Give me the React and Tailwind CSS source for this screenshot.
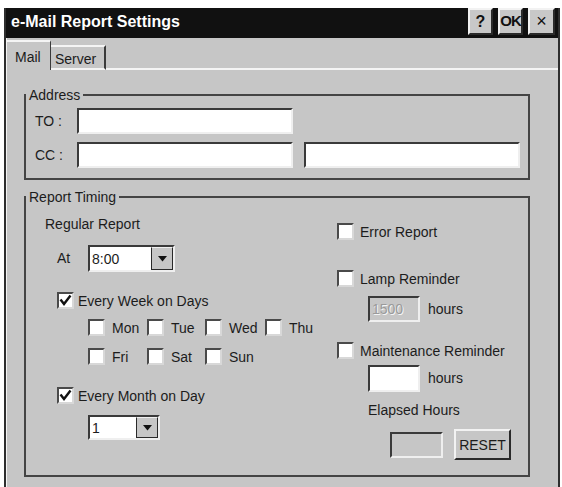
import React from 'react'

const sunken = 'border-2 border-t-[#3a3a3a] border-l-[#3a3a3a] border-r-[#efefef] border-b-[#efefef]'
const raised = 'border-2 border-t-[#f2f2f2] border-l-[#f2f2f2] border-r-[#2a2a2a] border-b-[#2a2a2a]'

const Check = ({ checked }) => (
  <span className={`w-[17px] h-[17px] shrink-0 bg-white flex items-center justify-center border-2 border-t-[#4a4a4a] border-l-[#4a4a4a] border-r-[#d8d8d8] border-b-[#d8d8d8]`}>
    {checked && (
      <svg width="13" height="13" viewBox="0 0 13 13">
        <path d="M1.5 5.5 L5 10 L11.5 1.5" fill="none" stroke="#111" strokeWidth="2.4" />
      </svg>
    )}
  </span>
)

const CheckRow = ({ checked, label, gap = 'gap-[6px]' }) => (
  <label className={`flex items-center ${gap} leading-[16px]`}>
    <Check checked={checked} />
    <span>{label}</span>
  </label>
)

const Combo = ({ value, width, height, btn }) => (
  <div className={`flex ${width} ${height} bg-white ${sunken}`}>
    <span className="flex-1 flex items-center pl-[2px] leading-[16px]">{value}</span>
    <span className={`${btn} flex items-center justify-center bg-[#c6c6c6] border-l border-[#2a2a2a] border-t border-t-[#f0f0f0] border-r border-r-[#2a2a2a] border-b border-b-[#2a2a2a]`}>
      <svg width="9" height="6" viewBox="0 0 9 6">
        <path d="M0 0 H9 L4.5 5.5 Z" fill="#111" />
      </svg>
    </span>
  </div>
)

const TitleButton = ({ children, w, className = '' }) => (
  <span className={`${w} h-[27px] flex items-center justify-center bg-[#c8c8c8] text-[#111] ${raised} ${className}`}>
    {children}
  </span>
)

const days = [
  ['Mon', 'Tue', 'Wed', 'Thu'],
  ['Fri', 'Sat', 'Sun'],
]

export default function App() {
  return (
    <div className="w-[562px] h-[487px] bg-white overflow-hidden pl-[4px] pt-[8px] font-['Liberation_Sans',Arial,sans-serif] text-[14px] text-[#1c1c1c]">
      <div className="w-[556px] h-[479px] bg-[#c6c6c6] border-x-2 border-[#2e2e2e] flex flex-col">
        {/* Title bar */}
        <div className="h-[30px] bg-[#111] flex items-start justify-between pl-[5px] pr-[3px]">
          <span className="text-white font-bold text-[16px] leading-[28px]">e-Mail Report Settings</span>
          <div className="flex gap-[5px]">
            <TitleButton w="w-[25px]" className="font-bold text-[16px]">?</TitleButton>
            <TitleButton w="w-[25px]" className="font-bold text-[15px] tracking-[-1px]">OK</TitleButton>
            <TitleButton w="w-[27px]" className="text-[18px]">×</TitleButton>
          </div>
        </div>

        <div className="flex-1 flex flex-col border-l border-[#f4f4f4]">
          {/* Tabs */}
          <div className="h-[32px] flex items-end">
            <div className="w-[44px] h-[30px] pl-[8px] pt-[7px] border-t-2 border-[#f4f4f4] border-r border-r-[#3a3a3a] leading-[16px]">
              Mail
            </div>
            <div className="w-[55px] h-[25px] pl-[4px] pt-[4px] border-t-2 border-t-[#f4f4f4] border-r-2 border-r-[#3a3a3a] border-b-2 border-b-[#f4f4f4] leading-[16px]">
              Server
            </div>
            <div className="flex-1 border-b-2 border-[#f4f4f4]" />
          </div>

          {/* Panel */}
          <div className="pl-[17px] pt-[17px]">
            <fieldset className="w-[506px] border-2 border-[#444] p-0">
              <legend className="px-[3px] leading-[16px]">Address</legend>
              <div className="pl-[9px] pt-[5px] pb-[10px] flex flex-col gap-[8px]">
                <div className="flex items-center">
                  <span className="w-[42px]">TO :</span>
                  <span className={`w-[216px] h-[26px] bg-white ${sunken}`} />
                </div>
                <div className="flex items-center">
                  <span className="w-[42px]">CC :</span>
                  <span className={`w-[216px] h-[26px] bg-white ${sunken}`} />
                  <span className={`ml-[11px] w-[216px] h-[26px] bg-white ${sunken}`} />
                </div>
              </div>
            </fieldset>

            <fieldset className="mt-[9px] w-[506px] border-2 border-[#444] p-0">
              <legend className="px-[3px] leading-[16px]">Report Timing</legend>
              <div className="pl-[19px] pt-[11px] pb-[15px] flex">
                {/* Left column */}
                <div className="w-[292px] flex flex-col">
                  <span className="leading-[16px]">Regular Report</span>
                  <div className="mt-[13px] flex items-center pl-[12px]">
                    <span className="w-[31px]">At</span>
                    <Combo value="8:00" width="w-[87px]" height="h-[27px]" btn="w-[22px]" />
                  </div>
                  <div className="mt-[20px] pl-[12px]">
                    <CheckRow checked label="Every Week on Days" gap="gap-[4px]" />
                  </div>
                  <div className="mt-[10px] pl-[43px] flex flex-col gap-[12px]">
                    {days.map((row, i) => (
                      <div key={i} className="grid grid-cols-[59px_58px_60px_auto]">
                        {row.map((d) => (
                          <CheckRow key={d} label={d} gap="gap-[7px]" />
                        ))}
                      </div>
                    ))}
                  </div>
                  <div className="mt-[22px] pl-[12px]">
                    <CheckRow checked label="Every Month on Day" gap="gap-[4px]" />
                  </div>
                  <div className="mt-[11px] pl-[43px]">
                    <Combo value="1" width="w-[72px]" height="h-[25px]" btn="w-[22px]" />
                  </div>
                </div>

                {/* Right column */}
                <div className="flex flex-col">
                  <div className="mt-[7px]">
                    <CheckRow label="Error Report" />
                  </div>
                  <div className="mt-[30px]">
                    <CheckRow label="Lamp Reminder" />
                  </div>
                  <div className="mt-[9px] pl-[31px] flex items-center gap-[8px]">
                    <span className={`w-[52px] h-[26px] bg-[#c6c6c6] ${sunken} flex items-center pl-[2px] text-[#9a9a9a] [text-shadow:1px_1px_0_#f4f4f4]`}>1500</span>
                    <span>hours</span>
                  </div>
                  <div className="mt-[20px]">
                    <CheckRow label="Maintenance Reminder" />
                  </div>
                  <div className="mt-[6px] pl-[31px] flex items-center gap-[8px]">
                    <span className={`w-[52px] h-[27px] bg-white ${sunken}`} />
                    <span>hours</span>
                  </div>
                  <span className="mt-[10px] pl-[31px] leading-[16px]">Elapsed Hours</span>
                  <div className="mt-[11px] pl-[53px] flex items-center gap-[11px]">
                    <span className={`w-[53px] h-[26px] bg-[#c6c6c6] ${sunken}`} />
                    <button className={`w-[57px] h-[31px] bg-[#c6c6c6] ${raised} text-[14px] leading-[16px]`}>RESET</button>
                  </div>
                </div>
              </div>
            </fieldset>
          </div>
        </div>
      </div>
    </div>
  )
}
